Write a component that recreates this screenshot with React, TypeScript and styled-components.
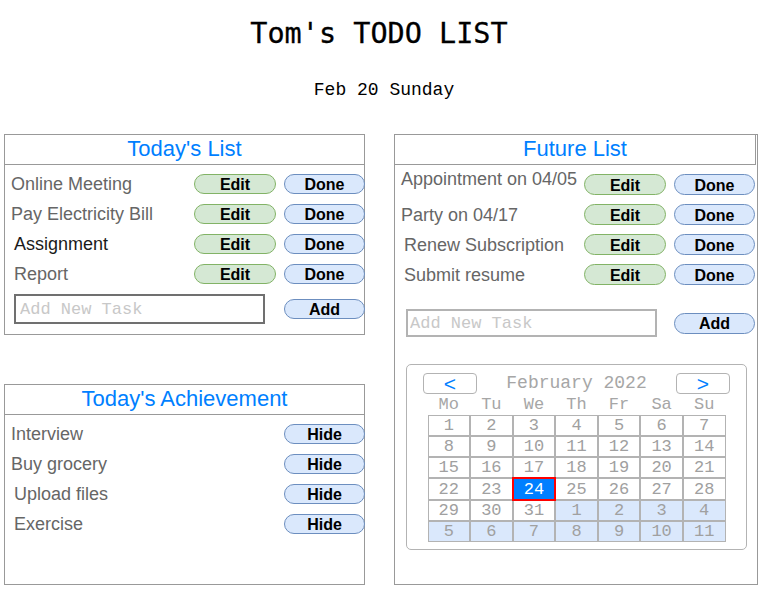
import React from "react";
import styled, { createGlobalStyle } from "styled-components";

const SANS = `"Liberation Sans", Arial, sans-serif`;
const MONO = `"Liberation Mono", "Courier New", monospace`;

const GlobalStyle = createGlobalStyle`
  html, body { margin: 0; padding: 0; background: #ffffff; }
  body { font-family: ${SANS}; }
  *, *::before, *::after { box-sizing: border-box; }
`;

const Page = styled.div`
  width: 762px;
`;

const Header = styled.header`
  height: 134px;
  display: flex;
  flex-direction: column;
  align-items: center;
  padding-top: 17px;
`;

const Title = styled.h1`
  margin: 0 0 0 -4px;
  font: 400 28.5px/34px "DejaVu Sans Mono", monospace;
  color: #000;
  -webkit-text-stroke: 0.3px #000;
`;

const DateLine = styled.div`
  margin: 29px 0 0 6px;
  font: 400 18px/20px ${MONO};
  color: #000;
`;

const Board = styled.main`
  display: grid;
  grid-template-columns: 361px 364px;
  column-gap: 29px;
  padding-left: 4px;
  align-items: start;
`;

const Column = styled.div`
  display: flex;
  flex-direction: column;
  gap: 49px;
`;

const Panel = styled.section<{ $height: number }>`
  height: ${(p) => p.$height}px;
  border: 1px solid #999999;
  display: flex;
  flex-direction: column;
`;

const PanelHeader = styled.h2<{ $inset?: boolean }>`
  margin: 0 ${(p) => (p.$inset ? "1px" : "0")} 0 0;
  height: 30px;
  border-bottom: 1px solid #999999;
  border-right: ${(p) => (p.$inset ? "1px solid #999999" : "none")};
  font: 400 22px/28px ${SANS};
  color: #007fff;
  text-align: center;
`;

const PanelBody = styled.div<{ $right: number; $gap: number }>`
  display: flex;
  flex-direction: column;
  padding: 9px 0 0 6px;
  gap: ${(p) => p.$gap}px;
  margin-right: ${(p) => p.$right}px;
`;

const Row = styled.div<{ $h: number }>`
  display: grid;
  grid-template-columns: minmax(0, 1fr) 82px 81px;
  grid-template-rows: ${(p) => p.$h}px;
  column-gap: 8px;
  align-items: center;
`;

const TaskText = styled.span<{ $indent?: number; $dark?: boolean; $lift?: number }>`
  grid-column: 1;
  font: 400 18px/20px ${SANS};
  color: ${(p) => (p.$dark ? "#1a1a1a" : "#666666")};
  padding-left: ${(p) => p.$indent ?? 0}px;
  margin-bottom: ${(p) => (p.$lift ?? 0) * 2}px;
  white-space: nowrap;
  overflow: visible;
`;

const Pill = styled.button<{ $tone: "green" | "blue"; $col: number; $h?: number }>`
  grid-column: ${(p) => p.$col};
  height: ${(p) => (p.$h ? `${p.$h}px` : "100%")};
  width: ${(p) => (p.$h ? "81px" : "auto")};
  padding: 2px 0 0;
  border-radius: 11px;
  border: 1px solid ${(p) => (p.$tone === "green" ? "#82b366" : "#6c8ebf")};
  background: ${(p) => (p.$tone === "green" ? "#d5e8d4" : "#dae8fc")};
  color: #000;
  font: 700 16px/1 ${SANS};
  cursor: pointer;
`;

const AddRow = styled.div<{ $h: number; $top: number }>`
  display: flex;
  align-items: center;
  height: ${(p) => p.$h}px;
  margin-top: ${(p) => p.$top}px;
`;

const TaskInput = styled.input<{ $light?: boolean; $h: number; $left: number; $pad: number }>`
  width: 251px;
  height: ${(p) => p.$h}px;
  margin: 0 0 0 ${(p) => p.$left}px;
  padding: 0 0 0 ${(p) => p.$pad}px;
  border: 2px solid ${(p) => (p.$light ? "#b3b3b3" : "#707070")};
  border-radius: 0;
  outline: none;
  background: #fff;
  font: 400 17px ${MONO};
  color: #333;
  &::placeholder { color: #c8c8c8; }
`;

const AddSlot = styled.div`
  margin-left: auto;
  display: flex;
`;

const Calendar = styled.div`
  width: 341px;
  height: 186px;
  margin: 18px 0 0 5px;
  padding: 8px 16px 0;
  border: 1px solid #b3b3b3;
  border-radius: 5px;
  display: flex;
  flex-direction: column;
`;

const CalNav = styled.div`
  display: flex;
  align-items: center;
  justify-content: space-between;
  height: 21px;
`;

const NavButton = styled.button`
  width: 54px;
  height: 21px;
  padding: 0;
  border: 1px solid #b3b3b3;
  border-radius: 4px;
  background: #fff;
  color: #007fff;
  font: 400 21px/19px ${SANS};
  cursor: pointer;
`;

const MonthLabel = styled.span`
  font: 400 18px/21px ${MONO};
  color: #a6a6a6;
`;

const DayNames = styled.div`
  align-self: center;
  width: 298px;
  display: grid;
  grid-template-columns: repeat(7, 1fr);
  height: 21px;
  font: 400 17px/21px ${MONO};
  color: #a6a6a6;
  text-align: center;
`;

const DateGrid = styled.div`
  align-self: center;
  width: 298px;
  height: 127px;
  display: grid;
  grid-template-columns: repeat(7, 1fr);
  grid-template-rows: repeat(6, 1fr);
  gap: 2px;
  padding: 1px;
  background: #b3b3b3;
`;

const DayCell = styled.div<{ $next?: boolean; $selected?: boolean }>`
  display: flex;
  align-items: center;
  justify-content: center;
  font: 400 17px/1 ${MONO};
  color: ${(p) => (p.$selected ? "#ffffff" : "#a0a0a0")};
  background: ${(p) => (p.$selected ? "#007fff" : p.$next ? "#dae8fc" : "#ffffff")};
  outline: ${(p) => (p.$selected ? "2px solid #ff0000" : "none")};
`;

type Task = { text: string; indent?: number; dark?: boolean; lift?: number };

const today: Task[] = [
  { text: "Online Meeting" },
  { text: "Pay Electricity Bill" },
  { text: "Assignment", indent: 3, dark: true },
  { text: "Report", indent: 3 },
];

const achievements: Task[] = [
  { text: "Interview" },
  { text: "Buy grocery" },
  { text: "Upload files", indent: 3 },
  { text: "Exercise", indent: 3 },
];

const future: Task[] = [
  { text: "Appointment on 04/05", lift: 6 },
  { text: "Party on 04/17" },
  { text: "Renew Subscription", indent: 3 },
  { text: "Submit resume", indent: 3 },
];

const dayNames = ["Mo", "Tu", "We", "Th", "Fr", "Sa", "Su"];
const days = [
  ...Array.from({ length: 31 }, (_, i) => ({ n: i + 1, next: false })),
  ...Array.from({ length: 11 }, (_, i) => ({ n: i + 1, next: true })),
];

export default function App() {
  return (
    <Page>
      <GlobalStyle />
      <Header>
        <Title>Tom's TODO LIST</Title>
        <DateLine>Feb 20 Sunday</DateLine>
      </Header>
      <Board>
        <Column>
          <Panel $height={201}>
            <PanelHeader>Today's List</PanelHeader>
            <PanelBody $right={-1} $gap={10}>
              {today.map((t) => (
                <Row key={t.text} $h={20}>
                  <TaskText $indent={t.indent} $dark={t.dark}>{t.text}</TaskText>
                  <Pill $tone="green" $col={2}>Edit</Pill>
                  <Pill $tone="blue" $col={3}>Done</Pill>
                </Row>
              ))}
              <AddRow $h={30} $top={0}>
                <TaskInput $h={30} $left={3} $pad={4} placeholder="Add New Task" />
                <AddSlot>
                  <Pill $tone="blue" $col={1} $h={20}>Add</Pill>
                </AddSlot>
              </AddRow>
            </PanelBody>
          </Panel>
          <Panel $height={201}>
            <PanelHeader>Today's Achievement</PanelHeader>
            <PanelBody $right={-1} $gap={10}>
              {achievements.map((t) => (
                <Row key={t.text} $h={20}>
                  <TaskText $indent={t.indent}>{t.text}</TaskText>
                  <Pill $tone="blue" $col={3}>Hide</Pill>
                </Row>
              ))}
            </PanelBody>
          </Panel>
        </Column>
        <Panel $height={451}>
          <PanelHeader $inset>Future List</PanelHeader>
          <PanelBody $right={2} $gap={9}>
            {future.map((t) => (
              <Row key={t.text} $h={21}>
                <TaskText $indent={t.indent} $lift={t.lift}>{t.text}</TaskText>
                <Pill $tone="green" $col={2}>Edit</Pill>
                <Pill $tone="blue" $col={3}>Done</Pill>
              </Row>
            ))}
            <AddRow $h={28} $top={15}>
              <TaskInput $light $h={28} $left={5} $pad={2} placeholder="Add New Task" />
              <AddSlot>
                <Pill $tone="blue" $col={1} $h={21}>Add</Pill>
              </AddSlot>
            </AddRow>
            <Calendar>
              <CalNav>
                <NavButton aria-label="previous month">&lt;</NavButton>
                <MonthLabel>February 2022</MonthLabel>
                <NavButton aria-label="next month">&gt;</NavButton>
              </CalNav>
              <DayNames>
                {dayNames.map((d) => (
                  <span key={d}>{d}</span>
                ))}
              </DayNames>
              <DateGrid>
                {days.map((d, i) => (
                  <DayCell key={i} $next={d.next} $selected={!d.next && d.n === 24}>
                    {d.n}
                  </DayCell>
                ))}
              </DateGrid>
            </Calendar>
          </PanelBody>
        </Panel>
      </Board>
    </Page>
  );
}
